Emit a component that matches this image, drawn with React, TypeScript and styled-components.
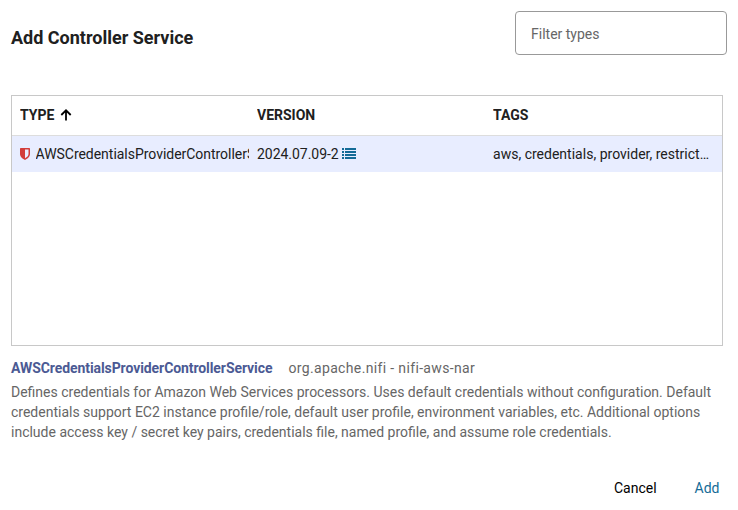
import React from "react";
import styled, { createGlobalStyle } from "styled-components";

const Global = createGlobalStyle`
  * { box-sizing: border-box; }
  body { margin: 0; background: #fff; font-family: Roboto, "Liberation Sans", sans-serif; font-size: 14px; color: #202020; }
`;
const Dialog = styled.main`
  width: 738px; height: 510px; padding: 11px 11px 0 11px; display: flex; flex-direction: column;
`;
const Header = styled.header`
  display: flex; justify-content: space-between; height: 84px; flex: none;
`;
const Title = styled.h1`
  margin: 15px 0 0; font-size: 18px; line-height: 24px; font-weight: 700;
`;
const Filter = styled.input`
  width: 212px; height: 44px; padding: 1px 15px 0; border: 1px solid #999; border-radius: 4px; background: #fff;
  font: 400 14px/20px Roboto, sans-serif; outline: 0;
  &::placeholder { color: #666; opacity: 1; }
`;
const Table = styled.section`
  width: 712px; height: 251px; border: 1px solid #c8c8c8; flex: none;
`;
const Row = styled.div<{ $head?: boolean }>`
  display: grid; grid-template-columns: 237px 236px 237px; align-items: center;
  height: ${(p) => (p.$head ? 40 : 36)}px;
  padding-bottom: ${(p) => (p.$head ? 1 : 0)}px;
  background: ${(p) => (p.$head ? "#fff" : "#e8edff")};
  border-bottom: ${(p) => (p.$head ? "1px solid #ddd" : "0")};
  font-weight: ${(p) => (p.$head ? 700 : 400)};
`;
const Cell = styled.div<{ $clip?: boolean }>`
  margin: 0 ${(p) => (p.$clip ? 0 : 8)}px 0 8px; min-width: 0; display: flex; align-items: center;
  overflow: hidden; white-space: nowrap; line-height: 20px;
`;
const Label = styled.span`
  overflow: hidden; text-overflow: ellipsis; letter-spacing: 0.01px;
`;
const TypeName = styled.span`
  flex: 1; min-width: 0; overflow: hidden; letter-spacing: -0.03px;
`;
const Version = styled.span`
  letter-spacing: -0.03px;
`;
const Icon = styled.svg<{ $gap: string }>`
  flex: none; margin: ${(p) => p.$gap};
`;
const Details = styled.div`
  display: flex; gap: 16px; margin-top: 12px; line-height: 20px; color: #666; letter-spacing: 0.35px;
`;
const Service = styled.strong`
  color: #4b5a94; font-weight: 700; letter-spacing: -0.08px;
`;
const Description = styled.p`
  margin: 4px 0 0; line-height: 20px; color: #666; white-space: pre;
`;
const Actions = styled.footer`
  display: flex; justify-content: flex-end; gap: 38px; margin-top: 36px; padding-right: 7.5px;
`;
const Action = styled.button<{ $primary?: boolean }>`
  border: 0; padding: 0; background: none; font: 400 14px/20px Roboto, sans-serif;
  color: ${(p) => (p.$primary ? "#146b97" : "#000")};
`;

export default function App() {
  return (
    <>
      <Global />
      <Dialog>
        <Header>
          <Title>Add Controller Service</Title>
          <Filter placeholder="Filter types" />
        </Header>
        <Table>
          <Row $head>
            <Cell>TYPE
              <Icon $gap="0 0 1px 6px" width="12" height="12" viewBox="0 0 12 12" fill="none" stroke="#000" strokeWidth="1.8"><path d="M6 11.5V1.5M1.3 6 6 1.3 10.7 6" /></Icon>
            </Cell>
            <Cell>VERSION</Cell>
            <Cell>TAGS</Cell>
          </Row>
          <Row>
            <Cell $clip>
              <Icon $gap="0 5.5px 0 0" width="10" height="12" viewBox="0 0 10 12"><path fill="#d23c3a" fillRule="evenodd" d="M.7 0H9.3Q10 0 10 .7V6C10 9 7 11 5 12C3 11 0 9 0 6V.7Q0 0 .7 0ZM5 1.5V10.2C7 9 8.5 8 8.5 6V1.5Z" /></Icon>
              <TypeName>AWSCredentialsProviderControllerService</TypeName>
            </Cell>
            <Cell>
              <Version>2024.07.09-2</Version>
              <Icon $gap="0 0 1px 3px" width="14" height="11" viewBox="0 0 14 11" fill="#146b97"><path d="M0 0h2v2H0zM3 0h11v2H3zM0 3h2v2H0zM3 3h11v2H3zM0 6h2v2H0zM3 6h11v2H3zM0 9h2v2H0zM3 9h11v2H3z" /></Icon>
            </Cell>
            <Cell><Label>aws, credentials, provider, restricted</Label></Cell>
          </Row>
        </Table>
        <Details>
          <Service>AWSCredentialsProviderControllerService</Service>
          <span>org.apache.nifi - nifi-aws-nar</span>
        </Details>
        <Description>{`Defines credentials for Amazon Web Services processors. Uses default credentials without configuration. Default
credentials support EC2 instance profile/role, default user profile, environment variables, etc. Additional options
include access key / secret key pairs, credentials file, named profile, and assume role credentials.`}</Description>
        <Actions>
          <Action>Cancel</Action>
          <Action $primary>Add</Action>
        </Actions>
      </Dialog>
    </>
  );
}
